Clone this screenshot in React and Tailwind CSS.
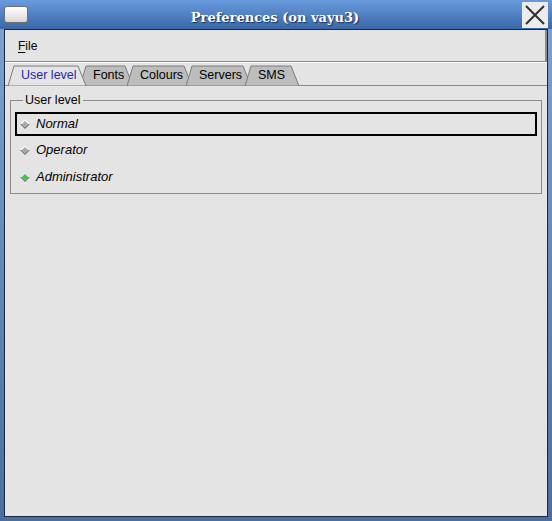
function Radio({ selected }) {
  return (
    <svg width="10" height="10" viewBox="0 0 10 10" className="shrink-0">
      <polygon points="5,0 10,5 5,10 0,5" fill={selected ? '#e8e8e8' : '#f4f4f4'} />
      <polygon points="0,5 5,10 10,5 8,5 5,8 2,5" fill="#7a7a7a" />
      <polygon points="5,2 8,5 5,8 2,5" fill={selected ? '#2fd02f' : '#a8a8a8'} />
    </svg>
  );
}

function Tab({ label, active, width }) {
  return (
    <div className={`relative h-[20px] flex items-center ${active ? 'z-10' : ''}`} style={{ width }}>
      <svg className="absolute inset-0" width={width + 8} height="21" viewBox={`0 0 ${width + 8} 21`} preserveAspectRatio="none">
        <polygon
          points={`0,21 6,1 ${width - 2},1 ${width + 6},21`}
          fill={active ? '#e4e4e4' : '#bdbdbd'}
          stroke="#7c7c7c"
          strokeWidth="1"
        />
      </svg>
      <span className={`relative pl-[13px] text-[12.5px] ${active ? 'text-[#2424a8]' : 'text-black'}`}>{label}</span>
    </div>
  );
}

export default function App() {
  return (
    <div className="w-[552px] h-[521px] bg-gradient-to-b from-[#7fa3d2] to-[#4a6f9f] flex flex-col" style={{ fontFamily: '"Liberation Sans", Arial, sans-serif' }}>
      {/* title bar */}
      <div className="h-[29px] shrink-0 flex items-center px-[4px] bg-gradient-to-b from-[#6a9be0] to-[#3a68a6]">
        <div className="w-[24px] h-[17px] rounded-[3px] bg-gradient-to-b from-white to-[#d8d8d8] border border-[#707070]" />
        <div className="flex-1 pt-[7px] text-center text-white font-bold text-[13px] [text-shadow:1px_1px_1px_#1a2f55]" style={{ fontFamily: '"DejaVu Serif", "Liberation Serif", serif' }}>
          Preferences (on vayu3)
        </div>
        <div className="w-[26px] h-[26px] bg-[#ececec] flex items-center justify-center">
          <svg width="22" height="22" viewBox="0 0 22 22">
            <path d="M2 2 L20 20 M20 2 L2 20" stroke="#303030" strokeWidth="2" />
          </svg>
        </div>
      </div>

      {/* body */}
      <div className="flex-1 mx-[4px] mb-[4px] border border-[#1c2840] bg-[#e4e4e4] flex flex-col text-black">
        {/* menubar */}
        <div className="h-[32px] shrink-0 flex items-center px-[13px] border-b border-r-2 border-b-[#8a8a8a] border-r-[#8a8a8a]">
          <span className="text-[12px]"><span className="underline underline-offset-2">F</span>ile</span>
        </div>
        <div className="h-px bg-white" />

        {/* tabs */}
        <div className="mt-[2px] pl-[3px] flex items-end h-[21px] border-b border-[#8a8a8a]">
          <Tab label="User level" active width={72} />
          <Tab label="Fonts" width={47} />
          <Tab label="Colours" width={59} />
          <Tab label="Servers" width={59} />
          <Tab label="SMS" width={48} />
        </div>

        {/* tab page */}
        <div className="px-[5px] pt-[8px]">
          <fieldset className="border border-[#8c8c8c] px-[4px] pb-[3px] pt-0">
            <legend className="ml-[8px] px-[2px] text-[12.5px] leading-[12px]">User level</legend>
            <div className="flex flex-col">
              <div className="h-[24px] mt-[6px] border-2 border-black flex items-center gap-[6px] px-[3px]">
                <Radio />
                <span className="italic text-[13px]">Normal</span>
              </div>
              <div className="h-[28px] flex items-center gap-[6px] px-[5px]">
                <Radio />
                <span className="italic text-[13px]">Operator</span>
              </div>
              <div className="h-[26px] flex items-center gap-[6px] px-[5px]">
                <Radio selected />
                <span className="italic text-[13px]">Administrator</span>
              </div>
            </div>
          </fieldset>
        </div>
      </div>
    </div>
  );
}
